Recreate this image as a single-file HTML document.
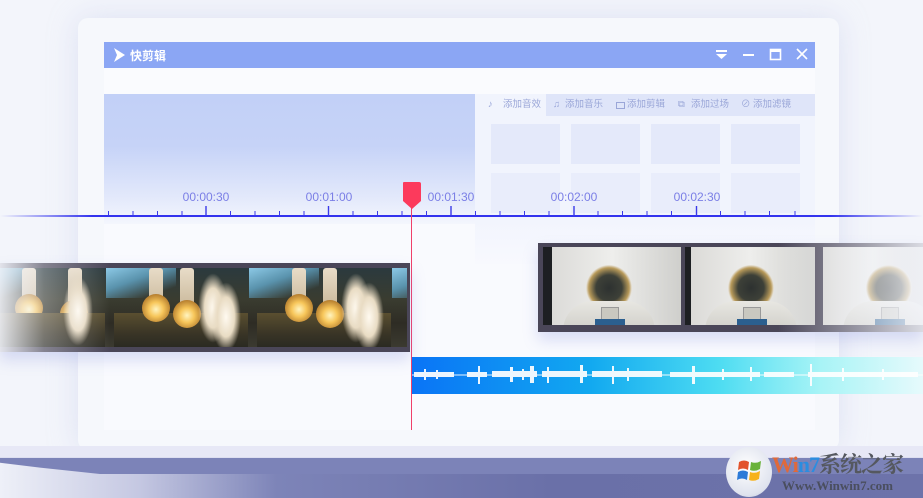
<!DOCTYPE html>
<html><head><meta charset="utf-8"><style>
*{margin:0;padding:0;box-sizing:border-box}
body{width:923px;height:498px;overflow:hidden;background:#f3f5fb;font-family:"Liberation Sans","Noto Sans CJK SC",sans-serif;position:relative}
.abs{position:absolute}
.lf{position:absolute;top:5px;width:143px;height:79px;overflow:hidden;background:linear-gradient(180deg,#2b3a3e 0%,#3a3c30 40%,#2e2c24 70%,#3b3a30 100%)}
.lf .sky{position:absolute;left:0;top:0;width:70px;height:30px;background:linear-gradient(160deg,#8cc9e6 0%,#5a93ad 40%,transparent 80%)}
.lf .b{position:absolute;width:28px;height:28px;border-radius:50%;background:radial-gradient(circle at 50% 55%,#fff4c0 0%,#f7c65a 35%,#b27a2c 75%,rgba(120,90,50,.6) 100%)}
.lf .s{position:absolute;width:14px;height:40px;background:linear-gradient(#e8dcc8,#c9b89a);border-radius:3px}
.lf .f{position:absolute;width:30px;height:70px;background:radial-gradient(ellipse at 50% 50%,#fffaf0 0%,#e9dcc4 40%,rgba(230,215,190,0) 70%)}
.lf .m{position:absolute;left:8px;top:45px;width:134px;height:34px;background:linear-gradient(#5a4f30,#3a3526 60%,#2a2a22)}
.af{position:absolute;top:4px;width:130px;height:78px;overflow:hidden;background:linear-gradient(90deg,#d9d8d5,#eeeeec 50%,#cfcfcc)}
.af .h{position:absolute;left:43px;top:18px;width:46px;height:46px;border-radius:50%;background:radial-gradient(circle at 50% 50%,#2d3130 0,#3d4038 40%,#b89a5a 62%,#e6e1d6 70%,#dedbd3 100%)}
.af .bd{position:absolute;left:20px;top:54px;width:92px;height:40px;border-radius:30px 30px 0 0;background:linear-gradient(#e8e7e2,#c7c6c0)}
.af .p{position:absolute;left:58px;top:60px;width:18px;height:20px;background:#c9c8c0;border:1px solid #999}
.af .bl{position:absolute;left:52px;top:72px;width:30px;height:10px;background:#2b5f8f}
.af .pole{position:absolute;left:0;top:0;width:9px;height:78px;background:#1d1f22}
</style></head><body>
<!-- laptop screen outer -->
<div class="abs" style="left:78px;top:18px;width:761px;height:432px;background:#f6f8fc;border-radius:10px;box-shadow:0 0 30px rgba(180,190,230,.35)"></div>
<!-- title bar -->
<div class="abs" style="left:104px;top:42px;width:711px;height:26px;background:#8ba6f4"></div>
<svg class="abs" style="left:113px;top:47px" width="13" height="16" viewBox="0 0 13 16"><path d="M1 1 L12 8 L1 15 L4 8 Z" fill="#fff"/></svg>
<div class="abs" style="left:130px;top:47px;color:#fff;font-size:12px;font-weight:bold">快剪辑</div>
<svg class="abs" style="left:712px;top:46px" width="100" height="18" viewBox="0 0 100 18">
<rect x="4" y="4" width="11" height="2" fill="#fff"/><path d="M4 8 L15 8 L9.5 13 Z" fill="#fff"/>
<rect x="31" y="8" width="11" height="2" fill="#fff"/>
<rect x="58.5" y="3.5" width="10" height="10" fill="none" stroke="#fff" stroke-width="1.6"/><rect x="58" y="3" width="11" height="3" fill="#fff"/>
<path d="M85 3 L95 13 M95 3 L85 13" stroke="#fff" stroke-width="1.6"/></svg>
<div class="abs" style="left:104px;top:68px;width:711px;height:26px;background:#fafbfe"></div>
<!-- content area -->
<div class="abs" style="left:104px;top:94px;width:711px;height:336px;background:#f9fafe"></div>
<div class="abs" style="left:104px;top:94px;width:371px;height:130px;background:linear-gradient(180deg,#c2d0f7 0%,#c6d3f7 40%,#e3e9fb 80%,#f4f6fd 100%)"></div>
<div class="abs" style="left:475px;top:94px;width:340px;height:170px;background:linear-gradient(180deg,#f1f4fd 70%,#f8f9fe)"></div>
<div class="abs" style="left:546px;top:94px;width:269px;height:22px;background:#dfe5f9"></div>
<div class="abs" style="left:476px;top:98px;font-size:9.5px;color:#9aa6d8;white-space:nowrap;line-height:14px">
<span style="position:absolute;left:12px">♪</span><span style="position:absolute;left:27px">添加音效</span>
<span style="position:absolute;left:77px">♫</span><span style="position:absolute;left:89px">添加音乐</span>
<span style="position:absolute;left:140px;top:4px;width:9px;height:7px;border:1px solid #9aa6d8"></span><span style="position:absolute;left:151px">添加剪辑</span>
<span style="position:absolute;left:202px">⧉</span><span style="position:absolute;left:215px">添加过场</span>
<span style="position:absolute;left:265px">⊘</span><span style="position:absolute;left:277px">添加滤镜</span></div>
<div class="abs" style="left:491px;top:124px;width:69px;height:40px;background:#e4e9fa"></div>
<div class="abs" style="left:571px;top:124px;width:69px;height:40px;background:#e4e9fa"></div>
<div class="abs" style="left:651px;top:124px;width:69px;height:40px;background:#e4e9fa"></div>
<div class="abs" style="left:731px;top:124px;width:69px;height:40px;background:#e4e9fa"></div>
<div class="abs" style="left:491px;top:173px;width:69px;height:40px;background:#e9edfb"></div>
<div class="abs" style="left:571px;top:173px;width:69px;height:40px;background:#e9edfb"></div>
<div class="abs" style="left:651px;top:173px;width:69px;height:40px;background:#e9edfb"></div>
<div class="abs" style="left:731px;top:173px;width:69px;height:40px;background:#e9edfb"></div>
<!-- timeline -->
<div class="abs" style="left:0;top:215px;width:923px;height:2px;background:linear-gradient(90deg,rgba(51,51,238,0),#3333ee 10%,#3333ee 90%,rgba(51,51,238,0))"></div>
<svg class="abs" style="left:0;top:180px" width="923" height="40">
<g stroke="#3a3ae8" stroke-width="1">
<line x1="108.5" y1="31" x2="108.5" y2="36"/><line x1="133" y1="31" x2="133" y2="36"/><line x1="157.5" y1="31" x2="157.5" y2="36"/><line x1="182" y1="31" x2="182" y2="36"/>
<line x1="206" y1="26" x2="206" y2="36" stroke-width="1.4"/>
<line x1="230.5" y1="31" x2="230.5" y2="36"/><line x1="255" y1="31" x2="255" y2="36"/><line x1="279.5" y1="31" x2="279.5" y2="36"/><line x1="304" y1="31" x2="304" y2="36"/>
<line x1="328.5" y1="26" x2="328.5" y2="36" stroke-width="1.4"/>
<line x1="353" y1="31" x2="353" y2="36"/><line x1="377.5" y1="31" x2="377.5" y2="36"/><line x1="402" y1="31" x2="402" y2="36"/><line x1="426.5" y1="31" x2="426.5" y2="36"/>
<line x1="451" y1="26" x2="451" y2="36" stroke-width="1.4"/>
<line x1="475.5" y1="31" x2="475.5" y2="36"/><line x1="500" y1="31" x2="500" y2="36"/><line x1="524.5" y1="31" x2="524.5" y2="36"/><line x1="549" y1="31" x2="549" y2="36"/>
<line x1="574" y1="26" x2="574" y2="36" stroke-width="1.4"/>
<line x1="598" y1="31" x2="598" y2="36"/><line x1="622.5" y1="31" x2="622.5" y2="36"/><line x1="647" y1="31" x2="647" y2="36"/><line x1="671.5" y1="31" x2="671.5" y2="36"/>
<line x1="696.5" y1="26" x2="696.5" y2="36" stroke-width="1.4"/>
<line x1="720.5" y1="31" x2="720.5" y2="36"/><line x1="745" y1="31" x2="745" y2="36"/><line x1="769.5" y1="31" x2="769.5" y2="36"/><line x1="795" y1="31" x2="795" y2="36"/>
</g>
<g fill="#7b7fe6" font-family="Liberation Sans" font-size="12" text-anchor="middle">
<text x="206" y="21">00:00:30</text><text x="329" y="21">00:01:00</text><text x="451" y="21">00:01:30</text><text x="574" y="21">00:02:00</text><text x="697" y="21">00:02:30</text></g>
</svg>
<!-- playhead -->
<div class="abs" style="left:411px;top:200px;width:1px;height:230px;background:#f0406a"></div>
<svg class="abs" style="left:401px;top:181px" width="22" height="30"><path d="M2 2 Q2 1 3 1 L18 1 Q20 1 20 3 L20 20 L11 28 L2 20 Z" fill="#fc3a5c"/></svg>
<!-- left film strip -->
<div class="abs" style="left:0;top:263px;width:410px;height:89px;background:#4a4658;box-shadow:0 8px 14px rgba(120,130,220,.25)">
 <div class="lf" style="left:-37px"><div class="sky"></div><div class="s" style="left:59px;top:0"></div><div class="b" style="left:52px;top:26px"></div><div class="s" style="left:105px;top:0"></div><div class="b" style="left:97px;top:32px"></div><div class="m"></div><div class="f" style="left:100px;top:8px"></div></div>
 <div class="lf" style="left:106px"><div class="sky"></div><div class="m"></div><div class="s" style="left:43px;top:0"></div><div class="b" style="left:36px;top:26px"></div><div class="s" style="left:74px;top:0"></div><div class="b" style="left:67px;top:32px"></div><div class="f" style="left:92px;top:5px"></div><div class="f" style="left:105px;top:14px"></div></div>
 <div class="lf" style="left:249px"><div class="sky"></div><div class="m"></div><div class="s" style="left:43px;top:0"></div><div class="b" style="left:36px;top:26px"></div><div class="s" style="left:74px;top:0"></div><div class="b" style="left:67px;top:32px"></div><div class="f" style="left:92px;top:5px"></div><div class="f" style="left:105px;top:14px"></div></div>
 <div class="lf" style="left:392px;width:15px"><div class="sky"></div></div>
 <div class="abs" style="left:0;top:0;width:110px;height:89px;background:linear-gradient(90deg,rgba(243,245,251,.9),rgba(243,245,251,.35) 40%,rgba(243,245,251,0))"></div>
</div>
<!-- right film strip -->
<div class="abs" style="left:538px;top:243px;width:385px;height:89px;background:#4a4658;box-shadow:0 8px 14px rgba(120,130,220,.25)">
 <div class="af" style="left:5px;width:138px"><div class="pole"></div><div class="h"></div><div class="bd"></div><div class="p"></div><div class="bl"></div></div>
 <div class="af" style="left:147px;width:130px"><div class="pole" style="width:6px"></div><div class="h"></div><div class="bd"></div><div class="p"></div><div class="bl"></div></div>
 <div class="af" style="left:285px;width:100px"><div class="h"></div><div class="bd"></div><div class="p"></div><div class="bl"></div></div>
 <div class="abs" style="left:240px;top:0;width:145px;height:89px;background:linear-gradient(90deg,rgba(243,245,251,0),rgba(243,245,251,.5) 60%,rgba(243,245,251,.85))"></div>
</div>
<!-- audio -->
<div class="abs" style="left:412px;top:357px;width:511px;height:37px;background:linear-gradient(90deg,#0a74f6 0%,#12a9f0 35%,#4ddcf2 60%,#a8f4f6 80%,#e6fafc 100%)"></div>
<svg class="abs" style="left:412px;top:357px" width="511" height="37"><g fill="#fff" opacity=".92">
<rect x="0" y="17" width="511" height="2" opacity=".5"/>
<rect x="2" y="15" width="40" height="5"/><rect x="12" y="12" width="2" height="11"/><rect x="24" y="13" width="2" height="9"/>
<rect x="55" y="15" width="20" height="5"/><rect x="66" y="9" width="2" height="18"/>
<rect x="80" y="14" width="45" height="6"/><rect x="98" y="10" width="3" height="15"/><rect x="110" y="12" width="2" height="11"/><rect x="118" y="9" width="4" height="17"/>
<rect x="130" y="14" width="45" height="6"/><rect x="135" y="10" width="2" height="16"/><rect x="168" y="8" width="3" height="18"/>
<rect x="180" y="14" width="70" height="6"/><rect x="200" y="9" width="2" height="18"/><rect x="215" y="11" width="2" height="13"/>
<rect x="258" y="15" width="90" height="5"/><rect x="280" y="9" width="3" height="18"/><rect x="310" y="12" width="2" height="11"/><rect x="338" y="10" width="2" height="14"/>
<rect x="352" y="15" width="30" height="5"/>
<rect x="396" y="15" width="110" height="5"/><rect x="398" y="7" width="2" height="22"/><rect x="430" y="11" width="2" height="13"/><rect x="470" y="12" width="2" height="11"/></g></svg>
<!-- laptop base -->
<div class="abs" style="left:0;top:446px;width:923px;height:12px;background:#e7e8f6;border-bottom:1px solid #dcdef0"></div>
<div class="abs" style="left:0;top:458px;width:923px;height:40px;background:linear-gradient(90deg,#eef0f8 0%,#c5c8e2 15%,#7d84b8 30%,#6a70a8 60%,#6d73aa 100%)"></div>
<div class="abs" style="left:0;top:458px;width:923px;height:16px;background:#7c83b8;clip-path:polygon(0 0,100% 0,100% 100%,100px 100%,40px 60%,0 30%)"></div>
<!-- watermark -->
<div class="abs" style="left:726px;top:447px;width:46px;height:50px;border-radius:50%;background:radial-gradient(circle at 45% 40%,#fff,#dfe3ee 70%,#b9bfd4)"></div>
<svg class="abs" style="left:736px;top:456px" width="28" height="30"><path d="M3 6 Q8 3 13 6 L12 14 Q7 11 2 14Z" fill="#e2532c"/><path d="M15 6 Q20 8 25 5 L24 13 Q19 16 14 14Z" fill="#6ab23a"/><path d="M2 16 Q7 13 12 16 L11 24 Q6 21 1 24Z" fill="#2c7ad8"/><path d="M14 16 Q19 18 24 15 L23 23 Q18 26 13 24Z" fill="#f7b21c"/></svg>
<div class="abs" style="left:772px;top:448px;font-size:22px;font-weight:bold;white-space:nowrap;font-family:'Liberation Serif','Noto Serif CJK SC',serif;letter-spacing:-1px"><span style="color:#e0693a">W</span><span style="color:#e0693a">i</span><span style="color:#2b8de0">n</span><span style="color:#2b8de0">7</span><span style="color:#55585f">系统之家</span></div>
<div class="abs" style="left:782px;top:478px;font-size:13px;font-weight:bold;color:#4a4e5e;font-family:'Liberation Serif',serif">Www.Winwin7.com</div>
</body></html>
